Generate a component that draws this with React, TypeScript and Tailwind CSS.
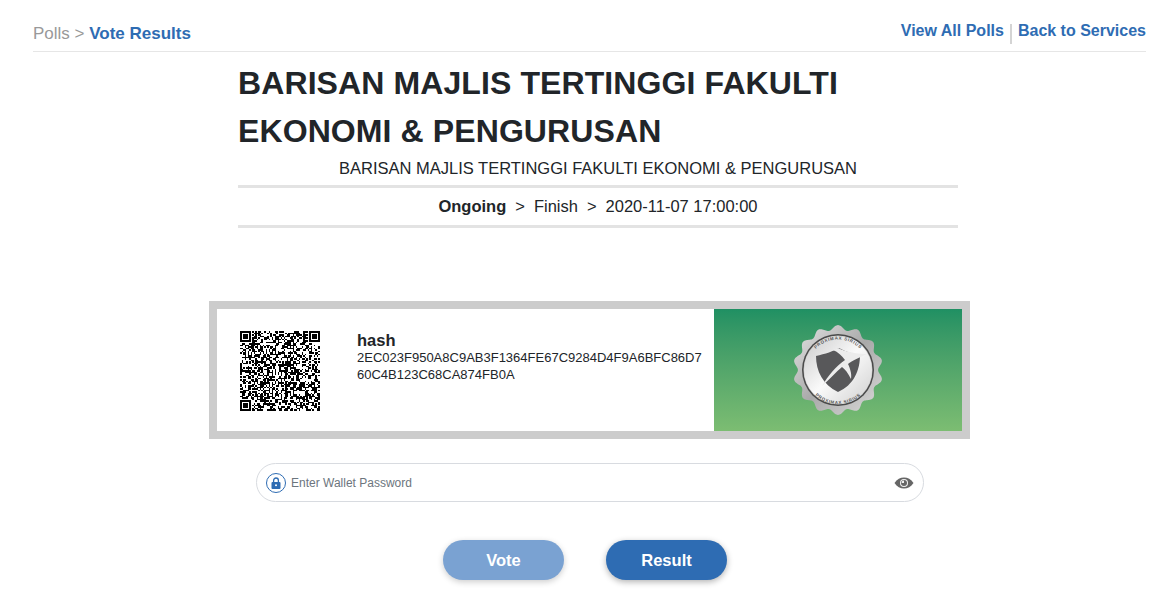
import React from 'react';

// pseudo random modules for the qr code
function buildQr(size: number) {
  const cells: { x: number; y: number }[] = [];
  let seed = 20201107;
  const inFinder = (x: number, y: number) =>
    (x < 8 && y < 8) || (x >= size - 8 && y < 8) || (x < 8 && y >= size - 8);
  for (let y = 0; y < size; y++) {
    for (let x = 0; x < size; x++) {
      seed = (seed * 1103515245 + 12345) & 0x7fffffff;
      if (!inFinder(x, y) && (seed >> 16) % 100 < 52) cells.push({ x, y });
    }
  }
  return cells;
}

function Finder({ x, y }: { x: number; y: number }) {
  return (
    <g>
      <rect x={x} y={y} width={7} height={7} fill="#000" />
      <rect x={x + 1} y={y + 1} width={5} height={5} fill="#fff" />
      <rect x={x + 2} y={y + 2} width={3} height={3} fill="#000" />
    </g>
  );
}

function QrCode() {
  const size = 53;
  const cells = buildQr(size);
  return (
    <svg width="80" height="80" viewBox={`0 0 ${size} ${size}`} shapeRendering="crispEdges" className="shrink-0">
      {cells.map((c) => (
        <rect key={`${c.x}-${c.y}`} x={c.x} y={c.y} width={1} height={1} fill="#000" />
      ))}
      <Finder x={0} y={0} />
      <Finder x={size - 7} y={0} />
      <Finder x={0} y={size - 7} />
    </svg>
  );
}

// scalloped edge of the seal
function scallopPath(cx: number, cy: number, r: number, amp: number, n: number) {
  const pts: string[] = [];
  for (let i = 0; i <= 360; i++) {
    const a = (i * Math.PI) / 180;
    const rr = r + amp * Math.cos(n * a);
    pts.push(`${(cx + rr * Math.sin(a)).toFixed(2)} ${(cy - rr * Math.cos(a)).toFixed(2)}`);
  }
  return `M${pts.join('L')}Z`;
}

function Seal() {
  return (
    <svg width="92" height="92" viewBox="0 0 92 92">
      <defs>
        <linearGradient id="sealEdge" x1="0" y1="0" x2="1" y2="1">
          <stop offset="0" stopColor="#e4e4e4" />
          <stop offset="0.5" stopColor="#a9a9a9" />
          <stop offset="1" stopColor="#dcdcdc" />
        </linearGradient>
        <linearGradient id="sealFace" x1="0" y1="0" x2="1" y2="1">
          <stop offset="0" stopColor="#c9c9c9" />
          <stop offset="0.5" stopColor="#fafafa" />
          <stop offset="1" stopColor="#cfcfcf" />
        </linearGradient>
        <path id="sealTextTop" d="M46 46m-30.5 0a30.5 30.5 0 1 1 61 0" fill="none" />
        <path id="sealTextBottom" d="M46 46m-34 0a34 34 0 0 0 68 0" fill="none" />
      </defs>
      <path d={scallopPath(46, 46, 42.5, 2.4, 14)} fill="url(#sealEdge)" />
      <circle cx="46" cy="46" r="36" fill="#4a4a4a" />
      <circle cx="46" cy="46" r="34.5" fill="#c4c4c4" />
      <circle cx="46" cy="46" r="34" fill="url(#sealFace)" />
      <text fontSize="4.4" fontWeight="700" fill="#555" letterSpacing="0.7" fontFamily="'Liberation Sans', sans-serif">
        <textPath href="#sealTextTop" startOffset="50%" textAnchor="middle">PROXIMAX SIRIUS</textPath>
      </text>
      <text fontSize="4.4" fontWeight="700" fill="#555" letterSpacing="0.7" fontFamily="'Liberation Sans', sans-serif">
        <textPath href="#sealTextBottom" startOffset="50%" textAnchor="middle">PROXIMAX SIRIUS</textPath>
      </text>
      <path d="M24 32 C33 30 42 27 47 24 C54 28 62 30 68 31 C68 46 62 61 46 68 C31 61 24 47 24 32Z" fill="#58585a" />
      <path d="M30 62 C36 52 44 42 53 36 C50 32 46 28 41 26 L46 24 C54 28 66 30 75 30 C68 33 60 37 56 40 C58 44 60 50 59 55 C56 49 53 45 50 43 C44 48 38 55 30 62Z" fill="#ececec" />
    </svg>
  );
}

export default function App() {
  return (
    <div className="min-h-[594px] bg-white font-['Liberation_Sans',Arial,sans-serif]">
      <div className="ml-[33px] mr-[25px] h-[52px] border-b border-[#e6e6e6] flex items-start justify-between">
        <div className="pt-[24px] text-[17px] leading-[20px] text-[#999999]">
          Polls &gt; <span className="font-bold text-[#2e6cb3]">Vote Results</span>
        </div>
        <div className="pt-[21px] flex items-start text-[16px] leading-[20px] font-bold text-[#2e6cb3]">
          <span>View All Polls</span>
          <span className="w-[2px] h-[20px] mt-[3px] mx-[6px] bg-[#d4d4d4]"></span>
          <span>Back to Services</span>
        </div>
      </div>

      <div className="w-[720px] ml-[238px]">
        <h1 className="text-[32px] leading-[48px] mt-[7px] font-bold text-[#212529] tracking-[0.1px]">
          BARISAN MAJLIS TERTINGGI FAKULTI EKONOMI &amp; PENGURUSAN
        </h1>
        <div className="text-center text-[16.5px] leading-[24px] text-[#212529] mt-[1px]">
          BARISAN MAJLIS TERTINGGI FAKULTI EKONOMI &amp; PENGURUSAN
        </div>
        <div className="mt-[5px] h-[43px] border-y-[3px] border-[#e3e3e3] flex items-center justify-center gap-[9px] text-[16.5px] text-[#212529]">
          <span className="font-bold">Ongoing</span>
          <span>&gt;</span>
          <span>Finish</span>
          <span>&gt;</span>
          <span>2020-11-07 17:00:00</span>
        </div>
      </div>

      <div className="mt-[73px] ml-[209px] w-[761px] h-[138px] border-[8px] border-[#cccccc] flex">
        <div className="w-[497px] bg-white flex items-start pl-[23px] pt-[22px]">
          <QrCode />
          <div className="ml-[37px] w-[345px] pt-[-2px]">
            <div className="text-[16.5px] leading-[18px] font-bold text-[#212529]">hash</div>
            <div className="text-[13px] leading-[17px] text-[#212529] break-all">
              2EC023F950A8C9AB3F1364FE67C9284D4F9A6BFC86D760C4B123C68CA874FB0A
            </div>
          </div>
        </div>
        <div className="flex-1 bg-gradient-to-b from-[#1f9063] to-[#7cbd72] flex items-center justify-center">
          <Seal />
        </div>
      </div>

      <div className="mt-[24px] ml-[256px] w-[668px] h-[39px] rounded-full border border-[#d8dbe0] flex items-center pl-[9px] pr-[9px]">
        <span className="w-[20px] h-[20px] rounded-full border border-[#2e6cb3] flex items-center justify-center shrink-0">
          <svg width="10" height="12" viewBox="0 0 10 12">
            <path d="M2.6 5V3.4a2.4 2.4 0 0 1 4.8 0V5" fill="none" stroke="#2e6cb3" strokeWidth="1.3" />
            <rect x="0.5" y="5" width="9" height="7" rx="1" fill="#2e6cb3" />
            <circle cx="5" cy="8.3" r="1" fill="#fff" />
          </svg>
        </span>
        <span className="ml-[5px] flex-1 text-[12px] text-[#6c757d]">Enter Wallet Password</span>
        <svg width="20" height="12" viewBox="0 0 20 12" className="shrink-0">
          <path d="M0.5 6C3 2.2 6.3 0.5 10 0.5S17 2.2 19.5 6C17 9.8 13.7 11.5 10 11.5S3 9.8 0.5 6Z" fill="#666666" />
          <circle cx="10" cy="6" r="4" fill="#f2f2f2" />
          <circle cx="10" cy="6" r="3" fill="#666666" />
          <path d="M10 3.6A2.4 2.4 0 0 0 7.6 6H10Z" fill="#f2f2f2" />
        </svg>
      </div>

      <div className="mt-[38px] flex justify-center gap-[42px] pr-[1px]">
        <button className="w-[121px] h-[40px] rounded-full bg-[#7aa2d2] text-white text-[16.5px] font-bold shadow-[0_2px_6px_rgba(0,0,0,0.2)]">
          Vote
        </button>
        <button className="w-[121px] h-[40px] rounded-full bg-[#2e6cb3] text-white text-[16.5px] font-bold shadow-[0_2px_6px_rgba(0,0,0,0.3)]">
          Result
        </button>
      </div>
    </div>
  );
}
